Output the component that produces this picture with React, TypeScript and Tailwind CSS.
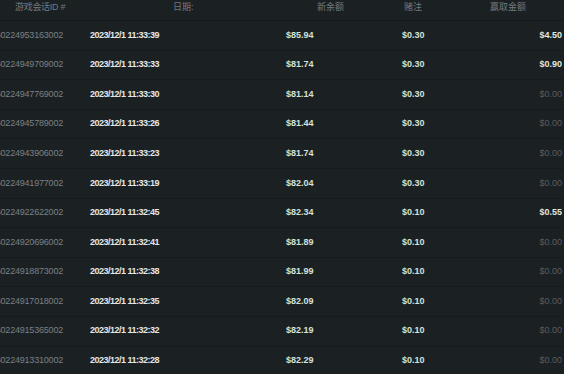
import React from "react";

// Types
interface Row {
  id: string;
  date: string;
  balance: string;
  bet: string;
  win: string;
}

// Data
const rows: Row[] = [
  { id: "60224953163002", date: "2023/12/1 11:33:39", balance: "$85.94", bet: "$0.30", win: "$4.50" },
  { id: "60224949709002", date: "2023/12/1 11:33:33", balance: "$81.74", bet: "$0.30", win: "$0.90" },
  { id: "60224947769002", date: "2023/12/1 11:33:30", balance: "$81.14", bet: "$0.30", win: "$0.00" },
  { id: "60224945789002", date: "2023/12/1 11:33:26", balance: "$81.44", bet: "$0.30", win: "$0.00" },
  { id: "60224943906002", date: "2023/12/1 11:33:23", balance: "$81.74", bet: "$0.30", win: "$0.00" },
  { id: "60224941977002", date: "2023/12/1 11:33:19", balance: "$82.04", bet: "$0.30", win: "$0.00" },
  { id: "60224922622002", date: "2023/12/1 11:32:45", balance: "$82.34", bet: "$0.10", win: "$0.55" },
  { id: "60224920696002", date: "2023/12/1 11:32:41", balance: "$81.89", bet: "$0.10", win: "$0.00" },
  { id: "60224918873002", date: "2023/12/1 11:32:38", balance: "$81.99", bet: "$0.10", win: "$0.00" },
  { id: "60224917018002", date: "2023/12/1 11:32:35", balance: "$82.09", bet: "$0.10", win: "$0.00" },
  { id: "60224915365002", date: "2023/12/1 11:32:32", balance: "$82.19", bet: "$0.10", win: "$0.00" },
  { id: "60224913310002", date: "2023/12/1 11:32:28", balance: "$82.29", bet: "$0.10", win: "$0.00" },
];

const font = {
  fontFamily: '"Liberation Sans", "Noto Sans CJK SC", sans-serif',
};

export default function App() {
  return (
    <div
      className="w-[564px] h-[374px] overflow-hidden bg-[#1b2023] text-[9px]"
      style={font}
    >
      {/* Header */}
      <div className="flex h-[21px] items-start pt-[1px] border-b border-[#15191b] text-[#737a7f]">
        <div className="w-[90px] shrink-0 pl-[15px] whitespace-nowrap tracking-[-0.3px]">游戏会话ID #</div>
        <div className="w-[196px] shrink-0 pl-[83px]">日期:</div>
        <div className="w-[116px] shrink-0 pl-[31px]">新余额</div>
        <div className="w-[88px] shrink-0 pl-[2px]">赌注</div>
        <div className="w-[74px] shrink-0">赢取金额</div>
      </div>

      {/* Rows */}
      {rows.map((row) => (
        <div
          key={row.id}
          className="flex h-[29.6px] items-center border-b border-[#171b1d]"
        >
          <div className="w-[90px] shrink-0 flex justify-end pr-[27px] overflow-hidden">
            <span className="text-[#7a8085] whitespace-nowrap tracking-[-0.2px]">{row.id}</span>
          </div>
          <div className="w-[196px] shrink-0 font-bold tracking-[-0.5px] text-[#e4e7e8] whitespace-nowrap">
            {row.date}
          </div>
          <div className="w-[116px] shrink-0 font-bold text-[#d3e2d9]">{row.balance}</div>
          <div className="w-[88px] shrink-0 font-bold text-[#d3e2d9]">{row.bet}</div>
          <div
            className={`w-[74px] shrink-0 text-right pr-[2px] ${
              row.win === "$0.00" ? "text-[#575d61]" : "font-bold text-[#dfe8e3]"
            }`}
          >
            {row.win}
          </div>
        </div>
      ))}
    </div>
  );
}
